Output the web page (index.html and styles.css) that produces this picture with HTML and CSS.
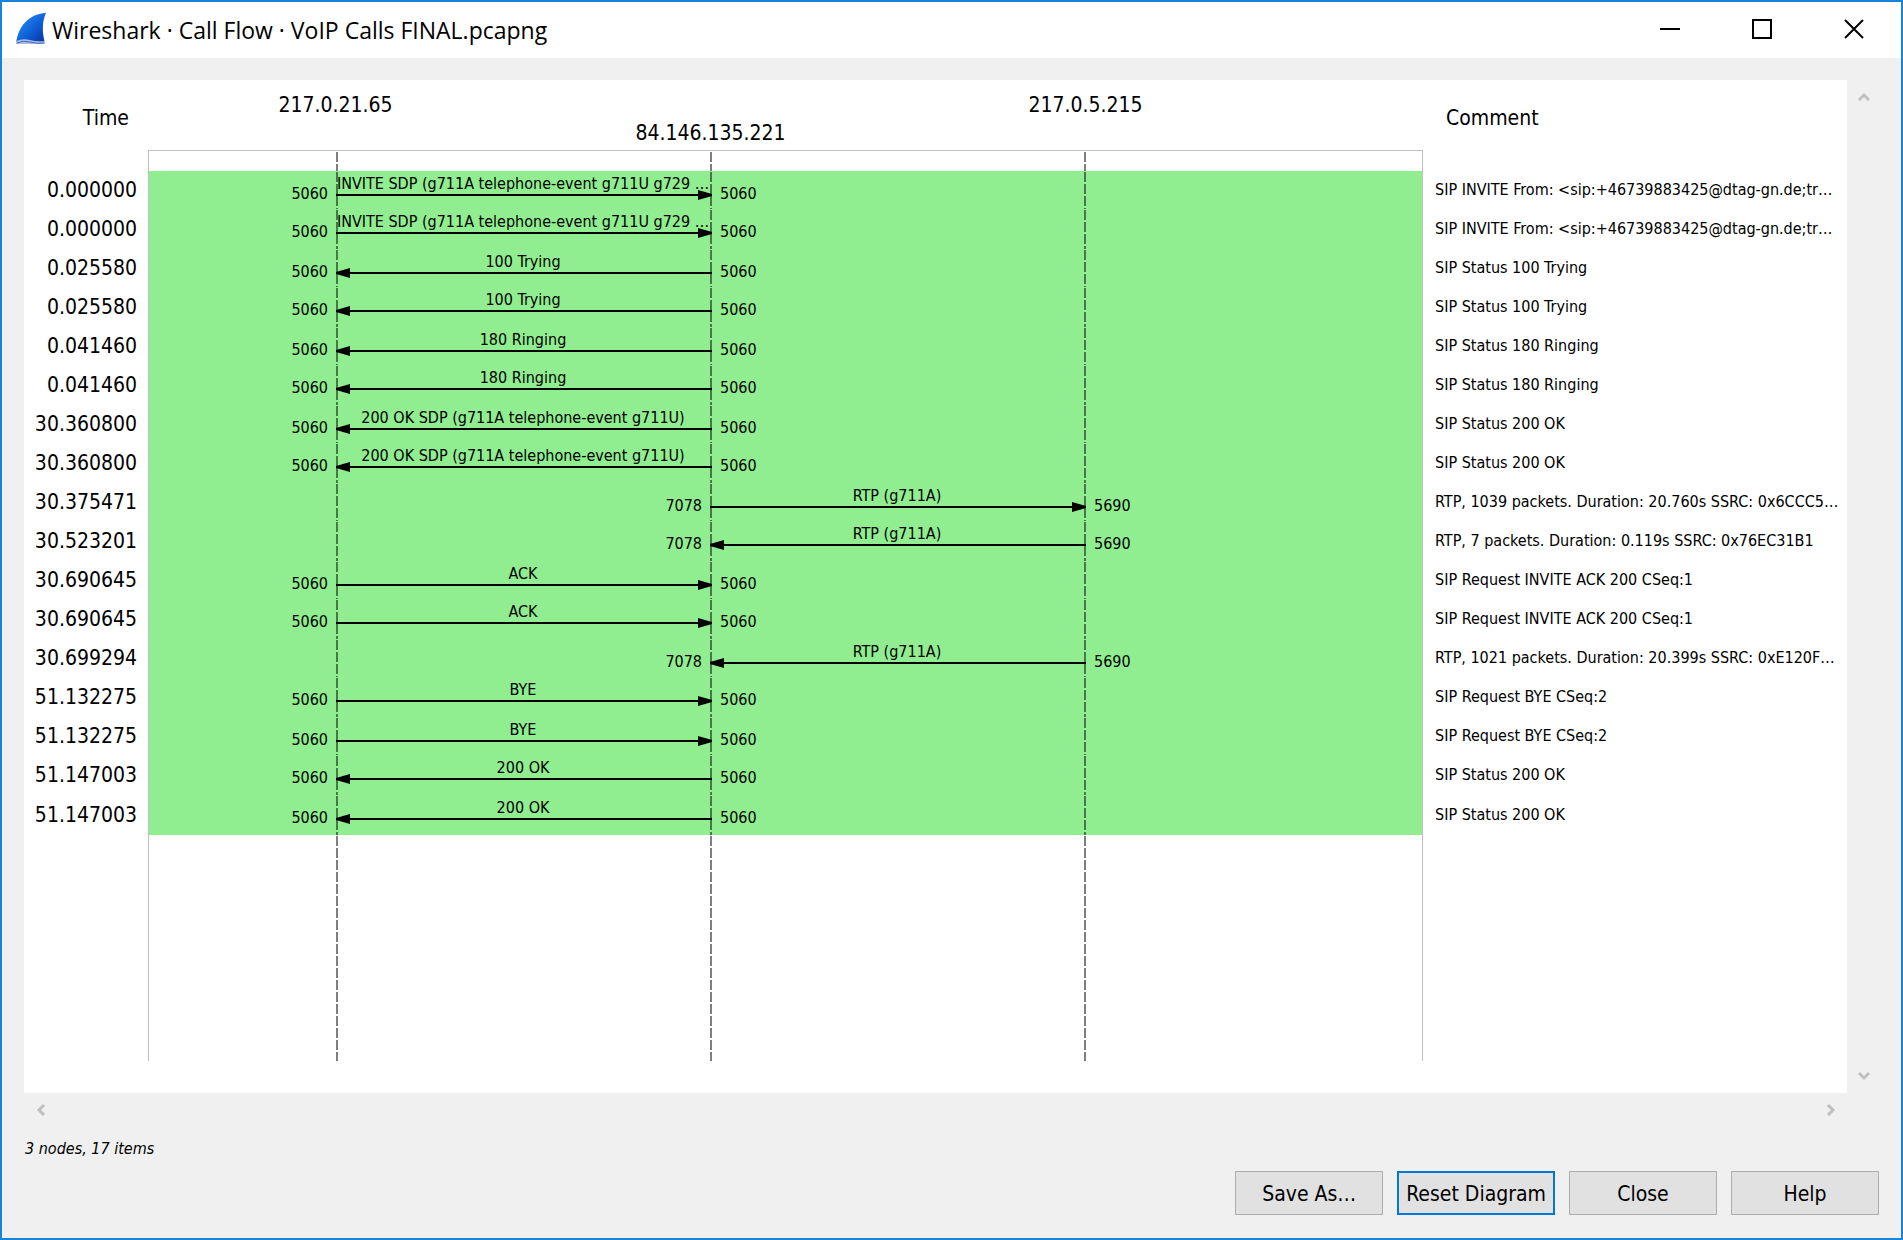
FILE: index.html
```html
<!DOCTYPE html>
<html lang="en">
<head>
<meta charset="utf-8">
<title>Wireshark · Call Flow · VoIP Calls FINAL.pcapng</title>
<link rel="stylesheet" href="styles.css">
</head>
<body>
<div class="window">
  <header class="titlebar">
    <svg class="logo" viewBox="0 0 32 32" aria-hidden="true">
      <defs>
        <linearGradient id="fin" x1="0" y1="0" x2="1" y2="1">
          <stop offset="0" stop-color="#3a95f0"/>
          <stop offset=".5" stop-color="#0f66dc"/>
          <stop offset="1" stop-color="#0a2c9c"/>
        </linearGradient>
      </defs>
      <path d="M1 30C3 14 13 1 31 0C27 8 27 20 30 30Z" fill="url(#fin)"/>
      <path d="M1 28Q8 25 15 27T30 28V31H1Z" fill="#a9bbe6"/>
      <path d="M2 30Q8 27 15 29T29 30" fill="none" stroke="#4468c2"/>
    </svg>
    <h1 class="title">Wireshark · Call Flow · VoIP Calls FINAL.pcapng</h1>
    <div class="controls">
      <button class="control" type="button" aria-label="Minimize"><svg class="glyph" viewBox="0 0 20 20"><path d="M0 10H20"/></svg></button>
      <button class="control" type="button" aria-label="Maximize"><svg class="glyph" viewBox="0 0 20 20"><path d="M1 1H19V19H1Z"/></svg></button>
      <button class="control" type="button" aria-label="Close window"><svg class="glyph" viewBox="0 0 20 20"><path d="M1 1L19 19M19 1L1 19"/></svg></button>
    </div>
  </header>
  <main class="content">
    <div class="view">
      <table class="flow">
        <thead>
          <tr class="head">
            <th class="time" scope="col">Time</th>
            <th class="lanes" scope="col">
              <div class="hosts"><span class="host">217.0.21.65</span><span class="host low">84.146.135.221</span><span class="host">217.0.5.215</span></div>
            </th>
            <th class="comment" scope="col">Comment</th>
          </tr>
        </thead>
        <tbody id="rows"></tbody>
      </table>
      <div class="scroll vertical">
        <button class="step" type="button" aria-label="Scroll up"><svg class="chevron" viewBox="0 0 12 12"><path d="M1 9L6 4L11 9"/></svg></button>
        <button class="step" type="button" aria-label="Scroll down"><svg class="chevron" viewBox="0 0 12 12"><path d="M1 3L6 8L11 3"/></svg></button>
      </div>
      <div class="scroll horizontal">
        <button class="step" type="button" aria-label="Scroll left"><svg class="chevron" viewBox="0 0 12 12"><path d="M9 1L4 6L9 11"/></svg></button>
        <button class="step" type="button" aria-label="Scroll right"><svg class="chevron" viewBox="0 0 12 12"><path d="M3 1L8 6L3 11"/></svg></button>
      </div>
    </div>
    <p class="status">3 nodes, 17 items</p>
    <footer class="actions">
      <button class="action" type="button">Save As…</button>
      <button class="action default" type="button">Reset Diagram</button>
      <button class="action" type="button">Close</button>
      <button class="action" type="button">Help</button>
    </footer>
  </main>
</div>
<script src="flow.js"></script>
</body>
</html>
```
FILE: styles.css
```css
* { box-sizing: border-box; }

body {
  margin: 0;
  font-family: "DejaVu Sans Condensed", "DejaVu Sans", Tahoma, sans-serif;
  font-size: 16px;
  color: #000;
}

.window {
  display: flex;
  flex-direction: column;
  min-height: 100vh;
  border: 2px solid #1883d7;
  background: #f0f0f0;
}

button { font: inherit; color: inherit; }

/* Title bar */
.titlebar {
  display: flex;
  align-items: flex-start;
  height: 56px;
  padding-left: 13px;
  background: #fff;
}
.logo { width: 32px; height: 32px; margin-top: 11px; }
.title {
  flex: 1;
  margin: 12px 0 0 5px;
  font-family: "Open Sans", "Noto Sans", sans-serif;
  font-size: 23px;
  line-height: 32px;
  font-weight: 400;
}
.controls { display: flex; padding-right: 1px; }
.control {
  display: grid;
  place-items: center;
  width: 92px;
  height: 54px;
  padding: 0;
  border: 0;
  background: none;
}
.glyph { width: 20px; height: 20px; fill: none; stroke: #000; stroke-width: 2; }

/* Dialog content */
.content {
  flex: 1;
  display: flex;
  flex-direction: column;
  padding: 22px 22px 23px;
}
.view {
  flex: 1;
  display: grid;
  grid-template-columns: 1fr 32px;
  grid-template-rows: 1fr 34px;
}

/* Call flow */
.flow {
  display: flex;
  flex-direction: column;
  padding-bottom: 32px;
  background: #fff;
}
thead { display: block; }
tbody { flex: 1; display: flex; flex-direction: column; }
tr { display: grid; grid-template-columns: 124px 1275px 1fr; }
td, th { padding: 0; font-weight: 400; }

.head { height: 70px; font-size: 21px; line-height: 26px; }
.head .time { padding: 25px 19px 0 0; text-align: right; }
.head .comment { padding: 25px 0 0 23px; text-align: left; }
.hosts {
  display: grid;
  grid-template-columns: repeat(3, 375px);
  height: 70px;
}
.host { padding-top: 12px; text-align: center; }
.low { padding-top: 40px; }

/* Dashed lifelines, one per host */
td.lanes {
  border: solid #c0c0c0;
  border-width: 0 1px;
  background-color: #90ee90;
  background-image:
    repeating-linear-gradient(rgba(0,0,0,.5) 0 10px, transparent 10px 12px),
    repeating-linear-gradient(rgba(0,0,0,.5) 0 10px, transparent 10px 12px),
    repeating-linear-gradient(rgba(0,0,0,.5) 0 10px, transparent 10px 12px);
  background-size: 2px 100%;
  background-position: 187px 1px, 561px 1px, 935px 1px;
  background-repeat: no-repeat;
}
.blank td.lanes { background-color: #fff; }
.top { height: 21px; }
.top td.lanes { border-top-width: 1px; }
.rest { flex: 1; }

.call { height: 38px; line-height: 20px; }
.call:nth-child(odd) { height: 40px; }
.call .time {
  align-self: center;
  padding-right: 11px;
  font-size: 21px;
  text-align: right;
}
.call .comment {
  align-self: center;
  padding-left: 12px;
  overflow: hidden;
  white-space: nowrap;
  text-overflow: ellipsis;
}
.call:nth-last-child(2) { height: 40px; }

.hop { display: grid; grid-template-columns: 187px 376px 1fr; }
.hop.second { grid-template-columns: 561px 376px 1fr; }
.port { padding: 13px 8px 0; }
.arrow {
  position: relative;
  height: 25px;
  padding: 3px 2px 0 0;
  border-bottom: 2px solid #000;
  text-align: center;
  white-space: nowrap;
}
.port:first-child { text-align: right; }
.arrow::after {
  content: "";
  position: absolute;
  bottom: -6px;
  width: 14px;
  height: 10px;
  background: #000;
}
.right::after { right: 0; clip-path: polygon(0 0, 100% 40%, 100% 60%, 0 100%); }
.left::after { left: 0; clip-path: polygon(100% 0, 0 40%, 0 60%, 100% 100%); }

/* Scroll bars */
.scroll { display: flex; justify-content: space-between; }
.vertical { flex-direction: column; }
.step {
  display: grid;
  place-items: center;
  width: 33px;
  height: 34px;
  padding: 0;
  border: 0;
  background: none;
}
.chevron { width: 12px; height: 12px; fill: none; stroke: #bfbfbf; stroke-width: 3; }

.status { margin: 10px 0 0 1px; font-style: italic; line-height: 24px; }

/* Buttons */
.actions { display: flex; justify-content: flex-end; gap: 14px; margin-top: 10px; }
.action {
  min-width: 148px;
  height: 44px;
  padding: 2px 7px 0;
  border: 1px solid #adadad;
  background: #e1e1e1;
  font-size: 21px;
}
.default { border: 2px solid #0078d7; }
```
FILE: flow.js
```js
// [time, first lane, direction, left port, right port, label, comment]
const invite = "INVITE SDP (g711A telephone-event g711U g729 …";
const ok = "200 OK SDP (g711A telephone-event g711U)";
const from = "SIP INVITE From: <sip:+46739883425@dtag-gn.de;tr…";
const calls = [
  ["0.000000", 1, "right", 5060, 5060, invite, from],
  ["0.000000", 1, "right", 5060, 5060, invite, from],
  ["0.025580", 1, "left", 5060, 5060, "100 Trying", "SIP Status 100 Trying"],
  ["0.025580", 1, "left", 5060, 5060, "100 Trying", "SIP Status 100 Trying"],
  ["0.041460", 1, "left", 5060, 5060, "180 Ringing", "SIP Status 180 Ringing"],
  ["0.041460", 1, "left", 5060, 5060, "180 Ringing", "SIP Status 180 Ringing"],
  ["30.360800", 1, "left", 5060, 5060, ok, "SIP Status 200 OK"],
  ["30.360800", 1, "left", 5060, 5060, ok, "SIP Status 200 OK"],
  ["30.375471", 2, "right", 7078, 5690, "RTP (g711A)", "RTP, 1039 packets. Duration: 20.760s SSRC: 0x6CCC5…"],
  ["30.523201", 2, "left", 7078, 5690, "RTP (g711A)", "RTP, 7 packets. Duration: 0.119s SSRC: 0x76EC31B1"],
  ["30.690645", 1, "right", 5060, 5060, "ACK", "SIP Request INVITE ACK 200 CSeq:1"],
  ["30.690645", 1, "right", 5060, 5060, "ACK", "SIP Request INVITE ACK 200 CSeq:1"],
  ["30.699294", 2, "left", 7078, 5690, "RTP (g711A)", "RTP, 1021 packets. Duration: 20.399s SSRC: 0xE120F…"],
  ["51.132275", 1, "right", 5060, 5060, "BYE", "SIP Request BYE CSeq:2"],
  ["51.132275", 1, "right", 5060, 5060, "BYE", "SIP Request BYE CSeq:2"],
  ["51.147003", 1, "left", 5060, 5060, "200 OK", "SIP Status 200 OK"],
  ["51.147003", 1, "left", 5060, 5060, "200 OK", "SIP Status 200 OK"]
];

const blank = (name) =>
  `<tr class="blank ${name}"><td class="time"></td><td class="lanes"></td><td class="comment"></td></tr>`;

const rows = calls.map(([time, lane, direction, left, right, label, comment]) => `
  <tr class="call">
    <td class="time">${time}</td>
    <td class="lanes"><div class="hop${lane === 2 ? " second" : ""}">
      <span class="port">${left}</span>
      <div class="arrow ${direction}">${label}</div>
      <span class="port">${right}</span>
    </div></td>
    <td class="comment">${comment.replace("<", "&lt;")}</td>
  </tr>`);

document.getElementById("rows").innerHTML = blank("top") + rows.join("") + blank("rest");
```
